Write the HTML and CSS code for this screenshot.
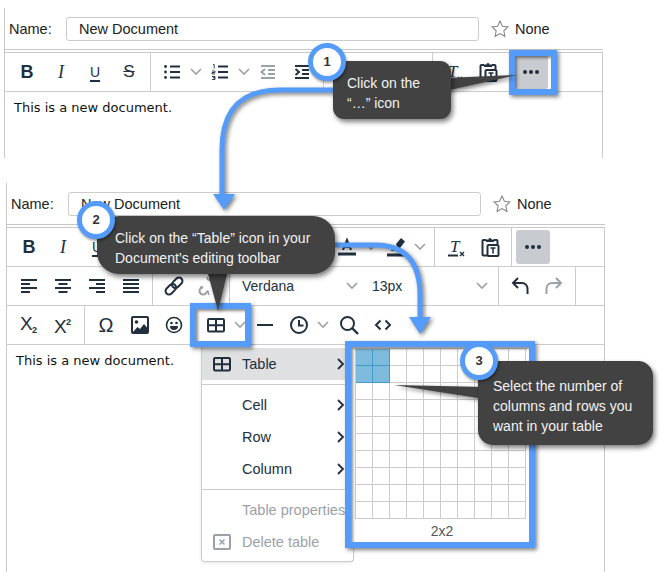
FILE: index.html
```html
<!DOCTYPE html>
<html lang="en">
<head>
    <meta charset="UTF-8">
    <title>Insert a table</title>
    <link rel="stylesheet" href="styles.css">
</head>
<body>
    <!-- shared toolbar icons -->
    <svg class="defs" width="0" height="0">
        <symbol id="i-chev" viewBox="0 0 14 10"><path d="M2 2l5 5 5-5" fill="none" stroke="currentColor" stroke-width="1.6"/></symbol>
        <symbol id="i-bullist" viewBox="0 0 24 24"><path d="M10 6.5h10M10 12h10M10 17.5h10" stroke="currentColor" stroke-width="2" fill="none"/><circle cx="5.5" cy="6.5" r="1.4" fill="currentColor"/><circle cx="5.5" cy="12" r="1.4" fill="currentColor"/><circle cx="5.5" cy="17.5" r="1.4" fill="currentColor"/></symbol>
        <symbol id="i-numlist" viewBox="0 0 24 24"><path d="M10 6.5h10M10 12h10M10 17.5h10" stroke="currentColor" stroke-width="2" fill="none"/><path d="M5 4.5h1.200v4M4 11h3v1.500h-3v1.500h3M4 16.500h3v1.200h-2h2v1.800h-3" stroke="currentColor" stroke-width=".9" fill="none"/></symbol>
        <symbol id="i-outdent" viewBox="0 0 24 24"><path d="M5 6h14M12 10h7M12 14h7M5 18h14M9 9l-3.500 3 3.500 3" stroke="currentColor" stroke-width="2" fill="none"/></symbol>
        <symbol id="i-indent" viewBox="0 0 24 24"><path d="M5 6h14M12 10h7M12 14h7M5 18h14M5.500 9l3.500 3-3.500 3" stroke="currentColor" stroke-width="2" fill="none"/></symbol>
        <symbol id="i-clear" viewBox="0 0 24 24"><text x="6" y="17" class="svg-t">T</text><path d="M4 20.500h10" stroke="currentColor" stroke-width="2"/><path d="M16 17l4 4M20 17l-4 4" stroke="currentColor" stroke-width="1.400"/></symbol>
        <symbol id="i-paste" viewBox="0 0 24 24"><path d="M8 5H5.500a1 1 0 0 0-1 1v13.500a1 1 0 0 0 1 1H9M16 5h2.500a1 1 0 0 1 1 1v3" fill="none" stroke="currentColor" stroke-width="2"/><path d="M8 7V4.500h2.500a1.500 1.500 0 0 1 3 0H16V7z" fill="currentColor"/><rect x="9.500" y="10" width="11" height="11" rx="1" fill="none" stroke="currentColor" stroke-width="2"/><path d="M12.500 13h5M15 13v5.500" stroke="currentColor" stroke-width="1.600"/></symbol>
        <symbol id="i-more" viewBox="0 0 24 24"><circle cx="6" cy="12" r="2" fill="currentColor"/><circle cx="12" cy="12" r="2" fill="currentColor"/><circle cx="18" cy="12" r="2" fill="currentColor"/></symbol>
        <symbol id="i-color" viewBox="0 0 24 24"><path d="M8 15l4-10 4 10M9.500 12h5" fill="none" stroke="currentColor" stroke-width="2"/><path d="M3 19h18" stroke="currentColor" stroke-width="3"/></symbol>
        <symbol id="i-marker" viewBox="0 0 24 24"><path d="M12 9l5-6 4 3.500-5 6.500-2 1z" fill="currentColor"/><path d="M3 20h17" stroke="currentColor" stroke-width="3"/><path d="M7 16l3-5 4 3-3 2z" fill="currentColor"/></symbol>
        <symbol id="i-left" viewBox="0 0 24 24"><path d="M4 6h16M4 10h9M4 14h16M4 18h9" stroke="currentColor" stroke-width="2"/></symbol>
        <symbol id="i-center" viewBox="0 0 24 24"><path d="M4 6h16M7.500 10h9M4 14h16M7.500 18h9" stroke="currentColor" stroke-width="2"/></symbol>
        <symbol id="i-right" viewBox="0 0 24 24"><path d="M4 6h16M11 10h9M4 14h16M11 18h9" stroke="currentColor" stroke-width="2"/></symbol>
        <symbol id="i-justify" viewBox="0 0 24 24"><path d="M4 6h16M4 10h16M4 14h16M4 18h16" stroke="currentColor" stroke-width="2"/></symbol>
        <symbol id="i-link" viewBox="0 0 24 24"><g transform="rotate(-45 12 12)" fill="none" stroke="currentColor" stroke-width="2"><rect x="1.500" y="8.500" width="12" height="7" rx="3.500"/><rect x="10.500" y="8.500" width="12" height="7" rx="3.500"/></g></symbol>
        <symbol id="i-unlink" viewBox="0 0 24 24"><g transform="rotate(-45 12 12)" fill="none" stroke="currentColor" stroke-width="2"><path d="M8 8.500H5a3.500 3.500 0 0 0 0 7h4M16 8.500h3a3.500 3.500 0 0 1 0 7h-4"/></g><path d="M4 13l3 1M11 3l1 3M20 11l-3-1M13 21l-1-3" stroke="currentColor" stroke-width="1.600"/></symbol>
        <symbol id="i-undo" viewBox="0 0 24 24"><path d="M10 4L5 9l5 5M5 9h9a5.500 5.500 0 0 1 5.500 5.500V20" fill="none" stroke="currentColor" stroke-width="2"/></symbol>
        <symbol id="i-redo" viewBox="0 0 24 24"><path d="M14 4l5 5-5 5M19 9h-9a5.500 5.500 0 0 0-5.500 5.500V20" fill="none" stroke="currentColor" stroke-width="2"/></symbol>
        <symbol id="i-sub" viewBox="0 0 24 24"><text x="3" y="17" class="svg-x">X</text><text x="15" y="20" class="svg-n">2</text></symbol>
        <symbol id="i-sup" viewBox="0 0 24 24"><text x="3" y="20" class="svg-x">X</text><text x="15" y="12" class="svg-n">2</text></symbol>
        <symbol id="i-image" viewBox="0 0 24 24"><rect x="4" y="4" width="16" height="16" rx="1" fill="none" stroke="currentColor" stroke-width="2"/><circle cx="8.500" cy="9" r="1.800" fill="currentColor"/><path d="M5 19l4.500-5 2.500 2 4-5 3 3.500V19z" fill="currentColor"/></symbol>
        <symbol id="i-emoji" viewBox="0 0 24 24"><circle cx="12" cy="12" r="7.500" fill="none" stroke="currentColor" stroke-width="1.600"/><circle cx="9.500" cy="10" r="1.300" fill="currentColor"/><circle cx="14.500" cy="10" r="1.300" fill="currentColor"/><path d="M8 13h8a4 4 0 0 1-8 0z" fill="currentColor"/></symbol>
        <symbol id="i-table" viewBox="0 0 24 24"><rect x="4" y="6" width="16" height="12.500" rx="1.200" fill="none" stroke="currentColor" stroke-width="2"/><path d="M4 12.200h16M12 6v12" stroke="currentColor" stroke-width="2"/></symbol>
        <symbol id="i-hr" viewBox="0 0 24 24"><path d="M4 12h16" stroke="currentColor" stroke-width="2"/></symbol>
        <symbol id="i-clock" viewBox="0 0 24 24"><circle cx="12" cy="12" r="8" fill="none" stroke="currentColor" stroke-width="2"/><path d="M12 7v5.500h4.500" fill="none" stroke="currentColor" stroke-width="2"/></symbol>
        <symbol id="i-search" viewBox="0 0 24 24"><circle cx="10.500" cy="10.500" r="6.500" fill="none" stroke="currentColor" stroke-width="2"/><path d="M15 15l6 6" stroke="currentColor" stroke-width="2.400"/></symbol>
        <symbol id="i-code" viewBox="0 0 24 24"><path d="M9.500 7.500L5 12l4.500 4.500M14.500 7.500L19 12l-4.500 4.500" fill="none" stroke="currentColor" stroke-width="2"/></symbol>
        <symbol id="i-delete" viewBox="0 0 24 24"><rect x="4" y="5" width="16" height="14" rx="1" fill="none" stroke="currentColor" stroke-width="2"/><path d="M9.500 9.500l5 5M14.500 9.500l-5 5" stroke="currentColor" stroke-width="1.600"/></symbol>
        <symbol id="i-right-chev" viewBox="0 0 10 14"><path d="M2 2l5 5-5 5" fill="none" stroke="currentColor" stroke-width="1.800"/></symbol>
    </svg>

    <!-- first editor -->
    <section class="panel panel-top">
        <div class="name-row">
            <label class="name-label">Name:</label>
            <div class="name-input">New Document</div>
            <svg class="star" viewBox="0 0 24 24"><path d="M12 2.500l2.900 6.200 6.600.8-4.900 4.600 1.300 6.700-5.900-3.300-5.900 3.300 1.300-6.700-4.900-4.600 6.600-.8z" fill="none" stroke="currentColor" stroke-width="1.300"/></svg>
            <span class="name-status">None</span>
        </div>
        <div class="editor">
            <div class="tb-row">
                <div class="tb-group first">
                    <span class="tb-btn b">B</span><span class="tb-btn i">I</span><span class="tb-btn u">U</span><span class="tb-btn s">S</span>
                </div>
                <div class="tb-group">
                    <svg class="ico"><use href="#i-bullist"/></svg><svg class="chev"><use href="#i-chev"/></svg>
                    <svg class="ico"><use href="#i-numlist"/></svg><svg class="chev"><use href="#i-chev"/></svg>
                    <svg class="ico off"><use href="#i-outdent"/></svg><svg class="ico"><use href="#i-indent"/></svg>
                </div>
                <div class="tb-group color-group">
                    <svg class="ico"><use href="#i-color"/></svg><svg class="chev"><use href="#i-chev"/></svg>
                    <svg class="ico gap"><use href="#i-marker"/></svg><svg class="chev"><use href="#i-chev"/></svg>
                </div>
                <div class="tb-group">
                    <svg class="ico"><use href="#i-clear"/></svg><svg class="ico"><use href="#i-paste"/></svg>
                </div>
                <div class="tb-group last">
                    <span class="tb-more"><svg class="ico"><use href="#i-more"/></svg></span>
                </div>
            </div>
            <p class="doc-text">This is a new document.</p>
        </div>
    </section>

    <!-- second editor, toolbar opened -->
    <section class="panel panel-bottom">
        <div class="name-row">
            <label class="name-label">Name:</label>
            <div class="name-input">New Document</div>
            <svg class="star" viewBox="0 0 24 24"><path d="M12 2.500l2.900 6.200 6.600.8-4.900 4.600 1.300 6.700-5.900-3.300-5.900 3.300 1.300-6.700-4.900-4.600 6.600-.8z" fill="none" stroke="currentColor" stroke-width="1.300"/></svg>
            <span class="name-status">None</span>
        </div>
        <div class="editor">
            <div class="tb-row">
                <div class="tb-group first">
                    <span class="tb-btn b">B</span><span class="tb-btn i">I</span><span class="tb-btn u">U</span><span class="tb-btn s">S</span>
                </div>
                <div class="tb-group">
                    <svg class="ico"><use href="#i-bullist"/></svg><svg class="chev"><use href="#i-chev"/></svg>
                    <svg class="ico"><use href="#i-numlist"/></svg><svg class="chev"><use href="#i-chev"/></svg>
                    <svg class="ico off"><use href="#i-outdent"/></svg><svg class="ico"><use href="#i-indent"/></svg>
                </div>
                <div class="tb-group color-group">
                    <svg class="ico"><use href="#i-color"/></svg><svg class="chev"><use href="#i-chev"/></svg>
                    <svg class="ico gap"><use href="#i-marker"/></svg><svg class="chev"><use href="#i-chev"/></svg>
                </div>
                <div class="tb-group">
                    <svg class="ico"><use href="#i-clear"/></svg><svg class="ico"><use href="#i-paste"/></svg>
                </div>
                <div class="tb-group last">
                    <span class="tb-more"><svg class="ico"><use href="#i-more"/></svg></span>
                </div>
            </div>
            <div class="tb-row">
                <div class="tb-group first">
                    <svg class="ico"><use href="#i-left"/></svg><svg class="ico"><use href="#i-center"/></svg><svg class="ico"><use href="#i-right"/></svg><svg class="ico"><use href="#i-justify"/></svg>
                </div>
                <div class="tb-group">
                    <svg class="ico"><use href="#i-link"/></svg><svg class="ico off"><use href="#i-unlink"/></svg>
                </div>
                <div class="tb-group select-group">
                    <div class="tb-select">Verdana<svg class="chev"><use href="#i-chev"/></svg></div>
                    <div class="tb-select">13px<svg class="chev"><use href="#i-chev"/></svg></div>
                </div>
                <div class="tb-group">
                    <svg class="ico"><use href="#i-undo"/></svg><svg class="ico off"><use href="#i-redo"/></svg>
                </div>
            </div>
            <div class="tb-row">
                <div class="tb-group first">
                    <svg class="ico"><use href="#i-sub"/></svg><svg class="ico"><use href="#i-sup"/></svg>
                </div>
                <div class="tb-group">
                    <span class="tb-btn omega">Ω</span><svg class="ico"><use href="#i-image"/></svg><svg class="ico"><use href="#i-emoji"/></svg>
                </div>
                <div class="tb-group last tight">
                    <svg class="ico"><use href="#i-table"/></svg><svg class="chev"><use href="#i-chev"/></svg>
                    <svg class="ico gap"><use href="#i-hr"/></svg><svg class="ico"><use href="#i-clock"/></svg><svg class="chev"><use href="#i-chev"/></svg>
                    <svg class="ico gap2"><use href="#i-search"/></svg><svg class="ico"><use href="#i-code"/></svg>
                </div>
            </div>
            <p class="doc-text">This is a new document.</p>
        </div>
    </section>

    <!-- table menu -->
    <div class="menu">
        <div class="menu-group">
            <div class="menu-item active"><svg class="menu-ico"><use href="#i-table"/></svg>Table<svg class="menu-chev"><use href="#i-right-chev"/></svg></div>
        </div>
        <div class="menu-group">
            <div class="menu-item"><span class="menu-ico"></span>Cell<svg class="menu-chev"><use href="#i-right-chev"/></svg></div>
            <div class="menu-item"><span class="menu-ico"></span>Row<svg class="menu-chev"><use href="#i-right-chev"/></svg></div>
            <div class="menu-item"><span class="menu-ico"></span>Column<svg class="menu-chev"><use href="#i-right-chev"/></svg></div>
        </div>
        <div class="menu-group">
            <div class="menu-item off"><span class="menu-ico"></span>Table properties</div>
            <div class="menu-item off"><svg class="menu-ico"><use href="#i-delete"/></svg>Delete table</div>
        </div>
    </div>

    <!-- table size picker -->
    <div class="picker">
        <div class="picker-grid" id="picker-grid"></div>
        <div class="picker-label">2x2</div>
    </div>

    <!-- annotations -->
    <div class="hl hl-more"></div>
    <div class="hl hl-table"></div>
    <div class="hl hl-picker"></div>

    <svg class="arrows" viewBox="0 0 665 572">
        <path class="arrow-line" d="M335 90H280C240 90 222 110 222 150V197"/>
        <path class="arrow-head" d="M213 194h22l-11 16z"/>
        <path class="arrow-line" d="M335 245H375C405 245 420 262 420 295V318"/>
        <path class="arrow-head" d="M409 317h22l-11 17z"/>
        <path class="tail" d="M445 78L517 75 445 91z"/>
        <path class="tail" d="M207 270h21l-10 41z"/>
        <path class="tail" d="M485 387L394 385 485 399z"/>
    </svg>

    <div class="callout callout-1">Click on the<br>“…” icon</div>
    <div class="callout callout-2">Click on the “Table” icon in your<br>Document’s editing toolbar</div>
    <div class="callout callout-3">Select the number of<br>columns and rows you<br>want in your table</div>

    <div class="badge badge-1">1</div>
    <div class="badge badge-2">2</div>
    <div class="badge badge-3">3</div>

    <script>
        // 10 x 10 size grid, first two rows and columns are selected
        const grid = document.getElementById('picker-grid');
        for (let r = 0; r < 10; r++) {
            for (let c = 0; c < 10; c++) {
                const cell = document.createElement('div');
                cell.className = r < 2 && c < 2 ? 'cell on' : 'cell';
                grid.appendChild(cell);
            }
        }
    </script>
</body>
</html>
```

FILE: styles.css
```css
/* base */
body {
    margin: 0;
    width: 665px;
    height: 572px;
    position: relative;
    overflow: hidden;
    background: #fff;
    font-family: "Liberation Sans", Arial, sans-serif;
    font-size: 14px;
    color: #222f3e;
}

.defs {
    position: absolute;
}

.svg-t {
    font: italic 17px "Liberation Serif", serif;
    fill: currentColor;
}

.svg-x {
    font: 19px "Liberation Sans", sans-serif;
    fill: currentColor;
}

.svg-n {
    font: bold 9px "Liberation Sans", sans-serif;
    fill: currentColor;
}

/* editor panels */
.panel {
    width: 599px;
    border-left: 1px solid #c8c8c8;
    box-sizing: border-box;
}

.panel-top {
    margin: 8px 0 0 4px;
    height: 150px;
}

.panel-bottom {
    margin: 25px 0 0 6px;
    height: 389px;
}

.name-row {
    display: flex;
    align-items: center;
    height: 42px;
    box-sizing: border-box;
    border-bottom: 1px solid #c8c8c8;
    padding: 0 0 0 4px;
    color: #222;
    font-size: 14.5px;
}

.name-label {
    width: 57px;
}

.name-input {
    width: 413px;
    height: 24px;
    box-sizing: border-box;
    border: 1px solid #ccc;
    border-radius: 3px;
    padding-left: 12px;
    line-height: 22px;
}

.star {
    width: 20px;
    height: 20px;
    margin-left: 11px;
    color: #888;
}

.name-status {
    margin-left: 5px;
}

.editor {
    margin-top: 2px;
    height: calc(100% - 44px);
    box-sizing: border-box;
    border-top: 1px solid #c8c8c8;
    border-right: 1px solid #c8c8c8;
}

/* toolbar */
.tb-row {
    display: flex;
    height: 39px;
    box-sizing: border-box;
    border-bottom: 1px solid #ccc;
}

.tb-group {
    display: flex;
    align-items: center;
    padding: 0 4px;
    border-right: 1px solid #ccc;
}

.tb-group.first {
    padding-left: 5px;
}

.tb-group.last {
    border-right: 0;
}

.tb-group.tight {
    padding-left: 3px;
}

.color-group {
    padding-right: 7px;
}

.select-group {
    gap: 4px;
    padding-right: 8px;
}

.tb-btn {
    width: 34px;
    text-align: center;
    font-size: 18px;
    line-height: 24px;
}

.tb-btn.b {
    font-weight: bold;
}

.tb-btn.i {
    font-family: "Liberation Serif", serif;
    font-style: italic;
}

.tb-btn.u {
    font-size: 14px;
    text-decoration: underline;
    text-decoration-thickness: 2px;
    text-underline-offset: 3px;
}

.tb-btn.s {
    text-decoration: line-through;
    font-size: 17px;
}

.tb-btn.omega {
    font-size: 20px;
}

.ico {
    width: 34px;
    height: 24px;
    flex: none;
}

.ico.off {
    color: #9ba1a8;
}

.ico.gap {
    margin-left: 1px;
}

.ico.gap2 {
    margin-left: 2px;
}

.chev {
    width: 14px;
    height: 10px;
    flex: none;
    color: #9ba1a8;
}

.tb-more {
    display: flex;
    align-items: center;
    width: 34px;
    height: 34px;
    background: #c8cbcf;
    border-radius: 3px;
}

.tb-select {
    display: flex;
    align-items: center;
    justify-content: space-between;
    width: 126px;
    box-sizing: border-box;
    padding: 0 1px 0 8px;
}

.doc-text {
    margin: 0;
    padding: 8px 9px;
    font-family: "DejaVu Sans", Verdana, sans-serif;
    font-size: 13px;
    line-height: 16px;
    color: #111;
}

/* table menu */
.menu {
    position: absolute;
    left: 201px;
    top: 346px;
    width: 153px;
    box-sizing: border-box;
    background: #fff;
    border: 1px solid #ccc;
    border-top: 0;
    border-radius: 0 0 4px 4px;
    box-shadow: 0 1px 3px rgba(0, 0, 0, 0.1);
    padding-bottom: 3px;
}

.menu-group {
    padding: 2px 0 4px;
    border-bottom: 1px solid #ccc;
}

.menu-group + .menu-group {
    padding-top: 4px;
}

.menu-group:last-child {
    border-bottom: 0;
    padding-bottom: 0;
}

.menu-item {
    display: flex;
    align-items: center;
    height: 32px;
    white-space: nowrap;
    font-size: 14.5px;
}

.menu-item.active {
    background: #dee0e2;
}

.menu-item.off {
    color: #9ba1a8;
}

.menu-ico {
    width: 24px;
    height: 24px;
    margin: 0 8px;
    flex: none;
}

.menu-chev {
    width: 10px;
    height: 14px;
    margin-left: auto;
    margin-right: 7px;
}

/* size picker */
.picker {
    position: absolute;
    left: 351px;
    top: 347px;
    width: 178px;
    height: 195px;
    box-sizing: border-box;
    padding: 1px 0 0 4px;
    background: #fff;
}

.picker-grid {
    display: grid;
    grid-template-columns: repeat(10, 17px);
    width: 171px;
    border-left: 1px solid #ccc;
    border-top: 1px solid #ccc;
}

.cell {
    height: 17px;
    box-sizing: border-box;
    border-right: 1px solid #ccc;
    border-bottom: 1px solid #ccc;
}

.cell.on {
    background: #7fbbdc;
    border-color: #3f9bcb;
}

.picker-label {
    text-align: center;
    line-height: 24px;
    color: #555;
}

/* annotation boxes */
.hl {
    position: absolute;
    box-sizing: border-box;
    border: 6px solid #559bfa;
    box-shadow: 2px 2px 4px rgba(0, 0, 0, 0.5), inset 2px 2px 3px rgba(0, 0, 0, 0.45);
}

.hl-more {
    left: 509px;
    top: 50px;
    width: 48px;
    height: 45px;
}

.hl-table {
    left: 190px;
    top: 303px;
    width: 61px;
    height: 44px;
}

.hl-picker {
    left: 345px;
    top: 341px;
    width: 190px;
    height: 207px;
}

.arrows {
    position: absolute;
    left: 0;
    top: 0;
    width: 665px;
    height: 572px;
    filter: drop-shadow(2px 2px 2px rgba(0, 0, 0, 0.5));
}

.arrow-line {
    fill: none;
    stroke: #559bfa;
    stroke-width: 5;
}

.arrow-head {
    fill: #559bfa;
}

.tail {
    fill: #424242;
}

.callout {
    position: absolute;
    box-sizing: border-box;
    background: #424242;
    color: #f2f2f2;
    line-height: 20px;
    white-space: nowrap;
    box-shadow: 2px 3px 5px rgba(0, 0, 0, 0.5);
}

.callout-1 {
    left: 333px;
    top: 61px;
    width: 118px;
    height: 58px;
    padding: 12px 14px;
    border-radius: 11px;
}

.callout-2 {
    left: 97px;
    top: 216px;
    width: 238px;
    height: 58px;
    padding: 12px 18px;
    border-radius: 22px;
}

.callout-3 {
    left: 478px;
    top: 361px;
    width: 175px;
    height: 84px;
    padding: 15px;
    border-radius: 15px;
}

.badge {
    position: absolute;
    width: 38px;
    height: 38px;
    box-sizing: border-box;
    border: 5px solid #559bfa;
    border-radius: 50%;
    background: #fff;
    color: #333;
    font-weight: bold;
    font-size: 13px;
    line-height: 28px;
    text-align: center;
    box-shadow: 1px 2px 3px rgba(0, 0, 0, 0.4);
}

.badge-1 {
    left: 308px;
    top: 43px;
}

.badge-2 {
    left: 77px;
    top: 201px;
}

.badge-3 {
    left: 460px;
    top: 342px;
}
```
